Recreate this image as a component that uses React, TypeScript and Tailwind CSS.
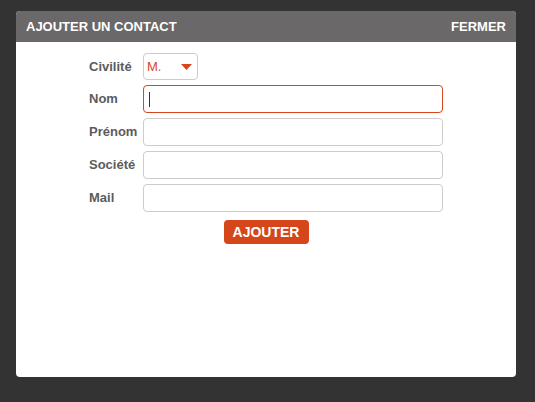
import React from "react";

const fields = ["Nom", "Prénom", "Société", "Mail"];

export default function App() {
  return (
    <div className="min-h-screen w-full bg-[#333333] pt-[11px] pl-[16px] font-['Liberation_Sans',Arial,sans-serif]">
      <div className="w-[500px] h-[366px] bg-white rounded-[4px] overflow-hidden flex flex-col">
        <div className="h-[31px] bg-[#6a6868] flex items-center justify-between pl-[10px] pr-[10px] text-white font-bold text-[13px]">
          <span>AJOUTER UN CONTACT</span>
          <span>FERMER</span>
        </div>
        <div className="flex flex-col items-center pt-[11px]">
          <div className="flex flex-col gap-[5px] w-[354px]">
            <div className="flex items-center">
              <label className="w-[54px] text-[13px] font-bold text-[#5c5c5c]">Civilité</label>
              <div className="w-[55px] h-[27px] border border-[#cccccc] rounded-[4px] flex items-center justify-between pl-[3px] pr-[5px]">
                <span className="text-[13px] text-[#d9461b]">M.</span>
                <svg width="11" height="6" viewBox="0 0 11 6">
                  <polygon points="0,0 11,0 5.5,6" fill="#d9461b" />
                </svg>
              </div>
            </div>
            {fields.map((f, i) => (
              <div key={f} className="flex items-center">
                <label className="w-[54px] text-[13px] font-bold text-[#5c5c5c]">{f}</label>
                <div
                  className={
                    i === 0
                      ? "w-[300px] h-[28px] border border-[#d9461b] rounded-[4px] flex items-center pl-[5px]"
                      : "w-[300px] h-[28px] border border-[#cccccc] rounded-[4px]"
                  }
                >
                  {i === 0 && <span className="w-px h-[15px] bg-[#333]" />}
                </div>
              </div>
            ))}
          </div>
          <button className="mt-[8px] w-[85px] h-[24px] bg-[#d5461a] rounded-[4px] text-white font-bold text-[14px]">
            AJOUTER
          </button>
        </div>
      </div>
    </div>
  );
}
